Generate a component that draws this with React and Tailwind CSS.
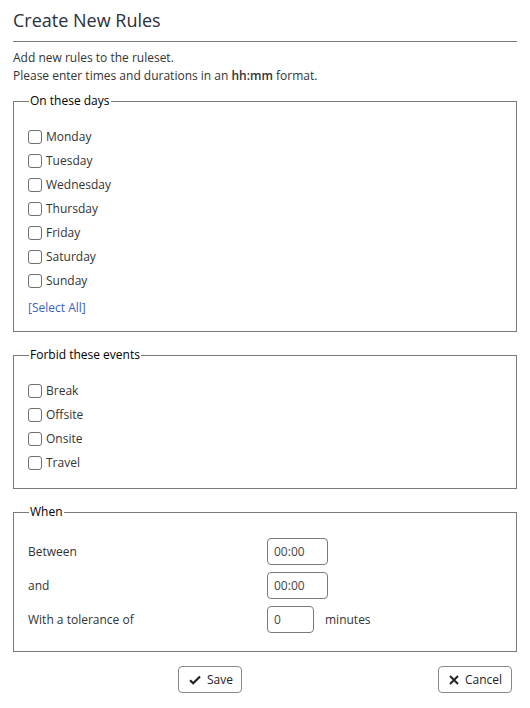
import { useState } from 'react';

const DAYS = ['Monday', 'Tuesday', 'Wednesday', 'Thursday', 'Friday', 'Saturday', 'Sunday'];
const EVENTS = ['Break', 'Offsite', 'Onsite', 'Travel'];

function CheckRow({ label, checked, onChange }) {
  return (
    <label className="flex h-6 items-center gap-1 text-[12px] text-[#333]">
      <input
        type="checkbox"
        checked={checked}
        onChange={onChange}
        className="h-[14px] w-[14px] appearance-none rounded-[3px] border border-[#707070] bg-white checked:bg-[#3c64c8]"
      />
      <span>{label}</span>
    </label>
  );
}

function Group({ title, className, children }) {
  return (
    <fieldset className={`border border-[#7a7a7a] px-[14px] ${className}`}>
      <legend className="ml-px px-px text-[12px] font-medium leading-[18px] text-black">{title}</legend>
      {children}
    </fieldset>
  );
}

export default function App() {
  const [days, setDays] = useState({});
  const [events, setEvents] = useState({});

  const toggle = (setter) => (key) => setter(prev => ({ ...prev, [key]: !prev[key] }));
  const selectAll = () => setDays(Object.fromEntries(DAYS.map(d => [d, true])));

  return (
    <div className="w-[530px] bg-white px-[13px] font-['Open_Sans',sans-serif] text-[#333]">
      {/* Header */}
      <h1 className="pt-2 text-[18px] leading-[25px] text-[#2b2f3a]">Create New Rules</h1>
      <div className="mt-2 h-px bg-[#7a7a7a]" />

      <div className="mt-[7px] text-[12px] leading-[18px]">
        <p>Add new rules to the ruleset.</p>
        <p>Please enter times and durations in an <b className="font-semibold">hh:mm</b> format.</p>
      </div>

      {/* Days */}
      <Group title="On these days" className="mt-[7px] pb-[14px]">
        <div className="pt-[15px]">
          {DAYS.map(d => (
            <CheckRow key={d} label={d} checked={!!days[d]} onChange={() => toggle(setDays)(d)} />
          ))}
        </div>
        <button
          type="button"
          onClick={selectAll}
          className="mt-[6px] block text-[12px] leading-[18px] text-[#3c5fc4]"
        >
          [Select All]
        </button>
      </Group>

      {/* Events */}
      <Group title="Forbid these events" className="mt-[14px] pb-[13px]">
        <div className="pt-[15px]">
          {EVENTS.map(e => (
            <CheckRow key={e} label={e} checked={!!events[e]} onChange={() => toggle(setEvents)(e)} />
          ))}
        </div>
      </Group>

      {/* When */}
      <Group title="When" className="mt-[14px] pb-[18px]">
        <div className="flex flex-col gap-[7px] pt-[17px] text-[12px]">
          <div className="flex h-[27px] items-center">
            <span className="w-[239px]">Between</span>
            <input defaultValue="00:00" className="h-[27px] w-[61px] rounded-[4px] border border-[#7a7a7a] px-[6px] text-[12px] text-[#444] outline-none" />
          </div>
          <div className="flex h-[27px] items-center">
            <span className="w-[239px]">and</span>
            <input defaultValue="00:00" className="h-[27px] w-[61px] rounded-[4px] border border-[#7a7a7a] px-[6px] text-[12px] text-[#444] outline-none" />
          </div>
          <div className="flex h-[27px] items-center">
            <span className="w-[239px]">With a tolerance of</span>
            <input defaultValue="0" className="h-[27px] w-[47px] rounded-[4px] border border-[#7a7a7a] px-[6px] text-[12px] text-[#444] outline-none" />
            <span className="ml-[11px]">minutes</span>
          </div>
        </div>
      </Group>

      {/* Actions */}
      <div className="mt-[14px] flex pb-[15px]">
        <button className="ml-[165px] flex h-[27px] w-[64px] items-center gap-[6px] rounded-[4px] border border-[#8a8a8a] bg-white pl-[10px] text-[12px] text-[#222]">
          <svg width="12" height="10" viewBox="0 0 12 10" fill="none">
            <path d="M1 5.2 L4.2 8.3 L11 1.4" stroke="#222" strokeWidth="2.2" />
          </svg>
          <span>Save</span>
        </button>
        <button className="ml-auto mr-[5px] flex h-[27px] w-[74px] items-center gap-[6px] rounded-[4px] border border-[#8a8a8a] bg-white pl-[10px] text-[12px] text-[#222]">
          <svg width="10" height="10" viewBox="0 0 10 10" fill="none">
            <path d="M1 1 L9 9 M9 1 L1 9" stroke="#222" strokeWidth="1.9" />
          </svg>
          <span>Cancel</span>
        </button>
      </div>
    </div>
  );
}
